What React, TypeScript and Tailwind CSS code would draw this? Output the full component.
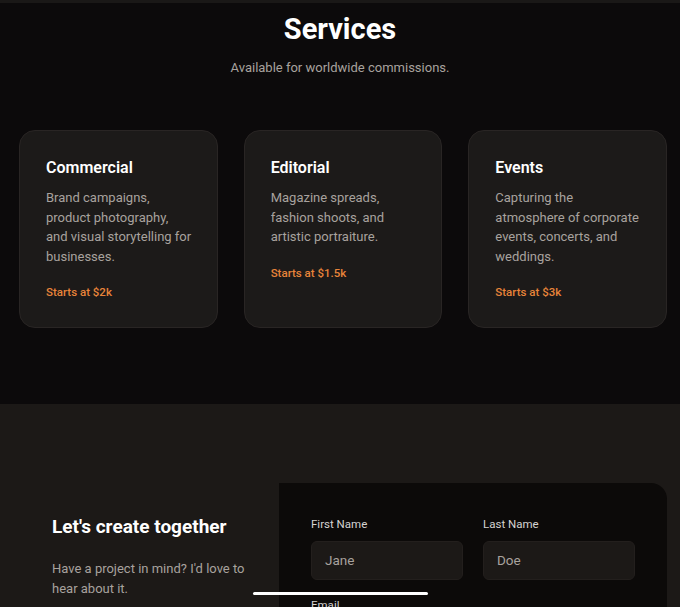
import React from "react";

interface Service {
  title: string;
  description: string;
  price: string;
}

const services: Service[] = [
  {
    title: "Commercial",
    description:
      "Brand campaigns, product photography, and visual storytelling for businesses.",
    price: "Starts at $2k",
  },
  {
    title: "Editorial",
    description: "Magazine spreads, fashion shoots, and artistic portraiture.",
    price: "Starts at $1.5k",
  },
  {
    title: "Events",
    description:
      "Capturing the atmosphere of corporate events, concerts, and weddings.",
    price: "Starts at $3k",
  },
];

function ServiceCard({ title, description, price }: Service) {
  return (
    <div className="rounded-2xl border border-[#292524] bg-[#1c1a19] pl-[26px] pr-[20px] pt-[25px] pb-[26px]">
      <h3 className="text-[16px] font-semibold leading-[24px] text-white">
        {title}
      </h3>
      <p className="mt-[8px] max-w-[146px] text-[13px] leading-[19.5px] text-[#a8a29e]">
        {description}
      </p>
      <p className="mt-[17px] text-[11.5px] font-medium leading-[18px] text-[#e8843a]">
        {price}
      </p>
    </div>
  );
}

function Field({ label, value }: { label: string; value: string }) {
  return (
    <div className="flex flex-col">
      <label className="text-[11.5px] leading-[16px] text-[#d6d3d1]">
        {label}
      </label>
      <div className="mt-[9px] flex h-[39px] items-center rounded-md border border-[#231f1d] bg-[#1c1917] px-[13px] text-[13.5px] text-[#a8a29e]">
        {value}
      </div>
    </div>
  );
}

export default function App() {
  return (
    <div
      className="relative h-[607px] w-[680px] overflow-hidden bg-[#0c0a0b]"
      style={{ fontFamily: "Roboto, 'Noto Sans', sans-serif" }}
    >
      <div className="h-[3px] bg-[#1a1817]" />

      {/* services */}
      <section className="pb-[76px]">
        <h2 className="mt-[8px] text-center text-[29px] font-bold leading-[36px] text-white">
          Services
        </h2>
        <p className="mt-[11px] text-center text-[13px] leading-[20px] text-[#a8a29e]">
          Available for worldwide commissions.
        </p>
        <div className="ml-[19px] mt-[52px] grid w-[648px] grid-cols-3 gap-[26px]">
          {services.map((s) => (
            <ServiceCard key={s.title} {...s} />
          ))}
        </div>
      </section>

      {/* contact */}
      <section className="bg-[#1c1917] pt-[79px]">
        <div className="ml-[19px] grid w-[648px] grid-cols-[260px_1fr]">
          <div className="pl-[33px] pt-[31px]">
            <h2 className="text-[19px] font-bold leading-[26px] text-white">
              Let's create together
            </h2>
            <p className="mt-[19px] pr-[12px] text-[13px] leading-[19.5px] text-[#a8a29e]">
              Have a project in mind? I'd love to hear about it.
            </p>
          </div>
          <form className="rounded-tr-2xl bg-[#0c0a09] px-[32px] pt-[33px] pb-[40px]">
            <div className="grid grid-cols-2 gap-[20px]">
              <Field label="First Name" value="Jane" />
              <Field label="Last Name" value="Doe" />
            </div>
            <div className="mt-[17px]">
              <Field label="Email" value="jane@example.com" />
            </div>
          </form>
        </div>
      </section>

      {/* home indicator */}
      <div className="absolute left-[253px] top-[592px] h-[3px] w-[175px] rounded-full bg-white" />
    </div>
  );
}
